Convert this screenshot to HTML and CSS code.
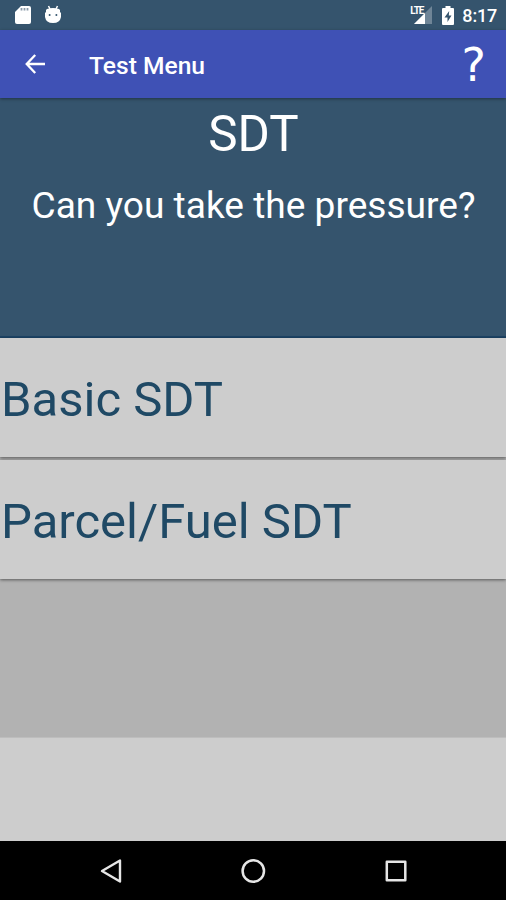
FILE: index.html
```html
<!DOCTYPE html>
<html lang="en">
<head>
  <meta charset="UTF-8" />
  <meta name="viewport" content="width=device-width, initial-scale=1.0" />
  <title>Test Menu</title>
  <link rel="stylesheet" href="styles.css">
</head>
<body>
  <div class="status-bar">
    <svg class="sd-card" width="16" height="20" viewBox="0 0 16 20">
      <path d="M6 1h8a2 2 0 0 1 2 2v14a2 2 0 0 1-2 2H2a2 2 0 0 1-2-2V7z" fill="#fff"/>
      <path d="M6.500 3v2.500M9.500 3v2.500M12.500 3v2.500" stroke="#8a9aa8" stroke-width="1.8"/>
    </svg>
    <svg class="debug" width="16" height="20" viewBox="0 0 16 20">
      <path d="M3.500 1l1.500 3M12.500 1l-1.500 3" stroke="#fff" stroke-width="1.500"/>
      <path d="M2 4q6-2 12 0l1 1v2l1 1v4q-1 6-8 6t-8-6v-4l1-1v-2z" fill="#fff"/>
      <circle cx="4.600" cy="10" r="1" fill="#35546d"/>
      <circle cx="11.400" cy="10" r="1" fill="#35546d"/>
    </svg>
    <div class="status-right">
      <div class="signal">
        <svg width="18" height="18" viewBox="0 0 18 18">
          <path d="M18 0v18H0z" fill="#6f8597"/>
          <path d="M11 7v11H0z" fill="#fff"/>
        </svg>
        <span class="lte">LTE</span>
      </div>
      <svg class="battery" width="12" height="19" viewBox="0 0 12 19">
        <path d="M3.500 0h5v2H11a1 1 0 0 1 1 1v15a1 1 0 0 1-1 1H1a1 1 0 0 1-1-1V3a1 1 0 0 1 1-1h2.500z" fill="#fff"/>
        <path d="M7.200 5L2.500 11.500H5.500V16L9.500 9.500H6.800z" fill="#35546d"/>
      </svg>
      <span class="clock">8:17</span>
    </div>
  </div>

  <header class="toolbar">
    <svg class="back" width="20" height="20" viewBox="0 0 20 20" fill="none" stroke="#fff" stroke-width="2.300">
      <path d="M10.200 1L1.700 10l8.500 9M2 10h18"/>
    </svg>
    <h1>Test Menu</h1>
    <span class="help">?</span>
  </header>

  <div class="intro">
    <h2>SDT</h2>
    <p>Can you take the pressure?</p>
  </div>

  <div class="menu">
    <div class="menu-item">Basic SDT</div>
    <div class="menu-item">Parcel/Fuel SDT</div>
  </div>

  <div class="bottom-panel"></div>

  <nav class="nav-bar">
    <svg width="24" height="26" viewBox="0 0 24 26" fill="none" stroke="#e6e6e6" stroke-width="2.400" stroke-linejoin="round">
      <path d="M21 2.500v21L3 13z"/>
    </svg>
    <svg width="26" height="26" viewBox="0 0 26 26" fill="none" stroke="#e6e6e6" stroke-width="2.500">
      <circle cx="13.300" cy="13" r="10.700"/>
    </svg>
    <svg width="26" height="26" viewBox="0 0 26 26" fill="none" stroke="#e6e6e6" stroke-width="2.500" stroke-linejoin="round">
      <rect x="3.800" y="3.800" width="18.500" height="18.500"/>
    </svg>
  </nav>
</body>
</html>
```

FILE: styles.css
```css
html, body {
  height: 100%;
  margin: 0;
  padding: 0;
}

body {
  display: flex;
  flex-direction: column;
  overflow: hidden;
  font-family: Roboto, "Liberation Sans", sans-serif;
  background: #b2b2b2;
  color: white;
}

svg {
  display: block;
  flex: none;
}

.status-bar {
  flex: none;
  height: 30px;
  box-sizing: border-box;
  padding: 0 9px 0 15px;
  display: flex;
  align-items: center;
  background: #35546d;
}

.debug {
  margin-left: 14px;
}

.status-right {
  margin-left: auto;
  display: flex;
  align-items: center;
}

.signal {
  position: relative;
  margin-right: 10px;
}

/* sits over the corner of the signal triangle */
.lte {
  position: absolute;
  left: -4px;
  top: 0;
  font-size: 10px;
  line-height: 9px;
  font-weight: 700;
  letter-spacing: -1px;
}

.clock {
  margin-left: 8px;
  font-size: 18px;
  line-height: 30px;
  padding-top: 2px;
  font-weight: 500;
  letter-spacing: -0.2px;
}

.toolbar {
  flex: none;
  height: 68px;
  box-sizing: border-box;
  padding: 0 20px 0 25px;
  display: flex;
  align-items: center;
  background: #3f51b5;
  box-shadow: 0 1px 3px rgba(0, 0, 0, 0.4);
  z-index: 1;
}

.toolbar h1 {
  margin: 3px 0 0 44px;
  font-size: 24.6px;
  font-weight: 500;
}

.help {
  margin-left: auto;
  font-family: "DejaVu Sans", sans-serif;
  font-size: 46px;
  line-height: 66px;
  padding-top: 2px;
}

.intro {
  flex: none;
  height: 240px;
  box-sizing: border-box;
  border-bottom: 2px solid #1c4365;
  background: #35546d;
  text-align: center;
}

.intro h2 {
  margin: 7px 0 0 1px;
  font-size: 49.3px;
  line-height: 59px;
  font-weight: 400;
}

.intro p {
  margin: 20px 0 0 1px;
  font-size: 37.1px;
  line-height: 44px;
}

.menu {
  flex: none;
  height: 399px;
}

.menu-item {
  height: 119px;
  margin-bottom: 3px;
  padding-left: 1px;
  background: #cdcdcd;
  box-shadow: 0 1px 3px rgba(0, 0, 0, 0.5);
  color: #1f4965;
  font-size: 49px;
  line-height: 124px;
}

.bottom-panel {
  flex: 1;
  border-top: 1px solid #bdbdbd;
  background: #cdcdcd;
}

.nav-bar {
  flex: none;
  height: 59px;
  box-sizing: border-box;
  padding: 0 97px 0 99px;
  display: flex;
  align-items: center;
  justify-content: space-between;
  background: #000;
}
```
